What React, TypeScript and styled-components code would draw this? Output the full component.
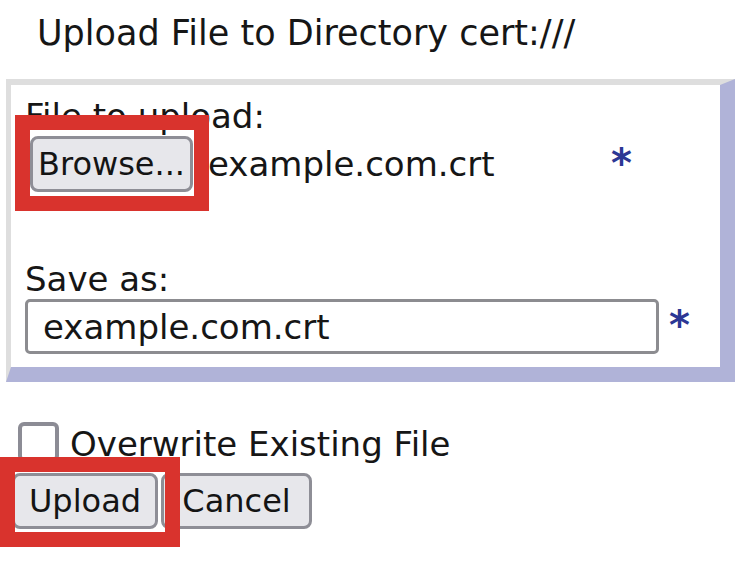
import React from "react";
import styled, { createGlobalStyle } from "styled-components";

const Global = createGlobalStyle`
  html, body { margin: 0; padding: 0; background: #ffffff; }
  body { font-family: "DejaVu Sans", Verdana, sans-serif; color: #161616; }
`;

const Page = styled.div`
  width: 744px;
  height: 570px;
  overflow: hidden;
  display: flex;
  flex-direction: column;
  align-items: flex-start;
`;

const Heading = styled.div`
  font-size: 35px;
  line-height: 40px;
  margin: 13px 0 0 37px;
  white-space: nowrap;
`;

const Panel = styled.div`
  box-sizing: border-box;
  width: 729px;
  margin: 26px 0 0 6px;
  border-style: solid;
  border-width: 6px 15px 15px 5px;
  border-color: #dedede #b0b3d8 #b0b3d8 #dedede;
  padding: 11px 0 13px 14px;
  display: flex;
  flex-direction: column;
`;

const FieldLabel = styled.div<{ $gap?: number }>`
  font-size: 34px;
  line-height: ${(p) => (p.$gap ? 39 : 40)}px;
  margin-top: ${(p) => p.$gap ?? 0}px;
  white-space: nowrap;
`;

const FileRow = styled.div`
  display: flex;
  align-items: center;
  height: 56px;
`;

const FileField = styled.div`
  width: 586px;
  display: flex;
  align-items: center;
`;

const Marked = styled.div`
  position: relative;
  display: inline-flex;
`;

const Button = styled.button<{ $w: number }>`
  box-sizing: border-box;
  width: ${(p) => p.$w}px;
  height: 56px;
  padding: 0;
  border: 3px solid #8e8e96;
  border-radius: 8px;
  background: #e7e7eb;
  color: #141414;
  font-family: "DejaVu Sans", Verdana, sans-serif;
  font-size: 32px;
  line-height: 1;
  display: flex;
  align-items: center;
  justify-content: center;
  white-space: nowrap;
`;

const BrowseSlot = styled(Marked)`
  margin-left: 5px;
  margin-right: 15px;
`;

const FileName = styled.span`
  font-size: 34px;
  line-height: 40px;
  white-space: nowrap;
`;

const Required = styled.span`
  font-size: 40px;
  font-weight: bold;
  line-height: 40px;
  color: #2c3794;
  margin-top: -3px;
`;

const InputRow = styled.div`
  display: flex;
  align-items: center;
  gap: 10px;
`;

const TextInput = styled.input`
  box-sizing: border-box;
  width: 634px;
  height: 55px;
  border: 3px solid #8c8c90;
  border-radius: 5px;
  padding: 0 0 0 15px;
  margin: 0;
  font-family: "DejaVu Sans", Verdana, sans-serif;
  font-size: 34px;
  color: #161616;
  background: #fff;
  outline: none;
`;

const CheckRow = styled.label`
  display: flex;
  align-items: flex-start;
  margin: 40px 0 0 18px;
`;

const CheckBox = styled.span`
  box-sizing: border-box;
  width: 41px;
  height: 40px;
  border: 4px solid #8c8c95;
  border-radius: 6px;
  background: #fff;
`;

const CheckText = styled.span`
  font-size: 34px;
  line-height: 40px;
  margin: 2px 0 0 11px;
  white-space: nowrap;
`;

const ButtonRow = styled.div`
  display: flex;
  gap: 3px;
  margin: 9px 0 0 12px;
`;

const Highlight = styled.span<{ $top: number; $left: number; $w: number; $h: number }>`
  position: absolute;
  box-sizing: border-box;
  top: ${(p) => p.$top}px;
  left: ${(p) => p.$left}px;
  width: ${(p) => p.$w}px;
  height: ${(p) => p.$h}px;
  border: 15px solid #d9332d;
  pointer-events: none;
  z-index: 2;
`;

export default function App() {
  return (
    <>
      <Global />
      <Page>
        <Heading>Upload File to Directory cert:///</Heading>
        <Panel>
          <FieldLabel>File to upload:</FieldLabel>
          <FileRow>
            <FileField>
              <BrowseSlot>
                <Button $w={163} type="button">Browse...</Button>
                <Highlight $top={-21} $left={-15} $w={194} $h={96} />
              </BrowseSlot>
              <FileName>example.com.crt</FileName>
            </FileField>
            <Required>*</Required>
          </FileRow>
          <FieldLabel $gap={68}>Save as:</FieldLabel>
          <InputRow>
            <TextInput defaultValue="example.com.crt" />
            <Required>*</Required>
          </InputRow>
        </Panel>
        <CheckRow>
          <CheckBox />
          <CheckText>Overwrite Existing File</CheckText>
        </CheckRow>
        <ButtonRow>
          <Marked>
            <Button $w={146} type="button">Upload</Button>
            <Highlight $top={-16} $left={-12} $w={180} $h={90} />
          </Marked>
          <Button $w={151} type="button">Cancel</Button>
        </ButtonRow>
      </Page>
    </>
  );
}
